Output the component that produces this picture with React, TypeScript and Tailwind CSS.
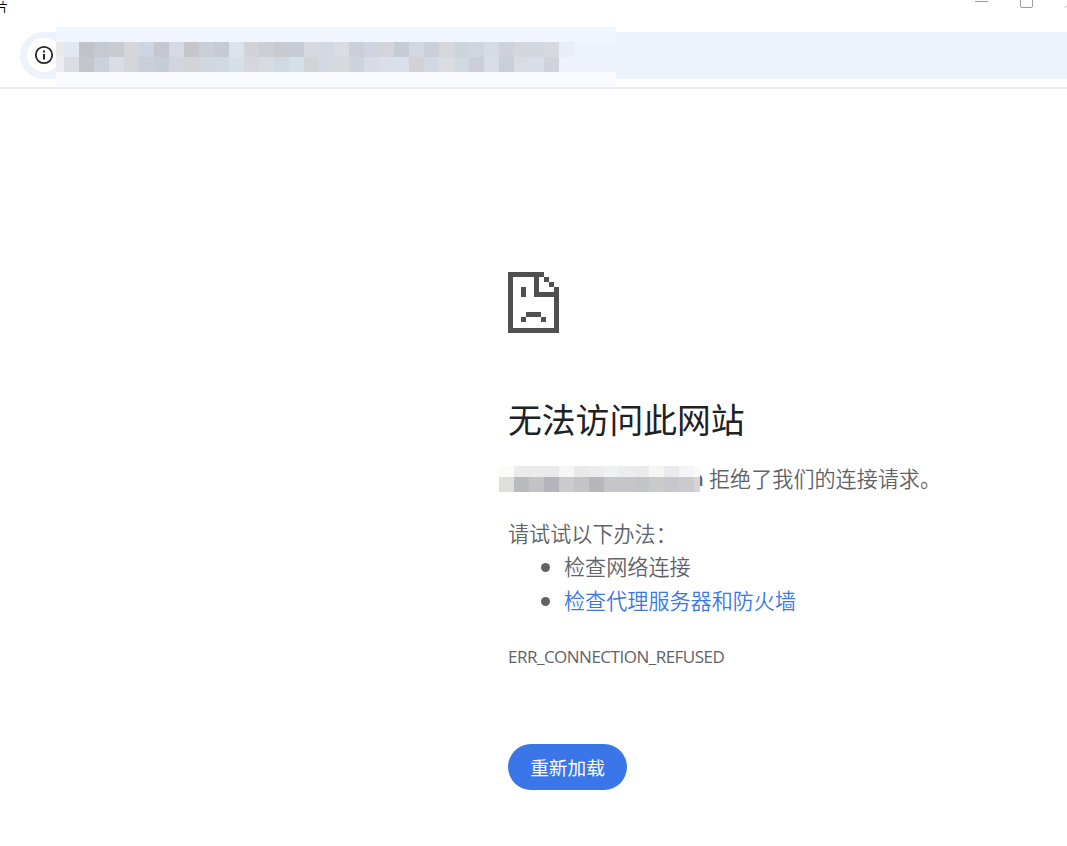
const addressRows = [
  "e8e8e9 e2e7f0 c1c2c8 c4c9d2 c8cbd0 d5d6dc cdd5e2 c4c6d0 d5dae4 c5c6cb c9ced7 c6cad3 dde3ed d2d3d8 cbcfd3 c9cacf c7cbd4 d6d9de d3d9e3 d9dde3 cacfd9 d0d4df d4d5db c5ccd3 d3d7e1 cacfd8 d6d7db ccd3d9 d1d5df d7dbe5 cdd1da d3d7db d1d7df d8d9de e8edf6",
  "ebecf1 dbdde3 c5c6cc cbd1da d9dde3 d3d5db c9ced9 c7cdd7 d2d5df d3d4d9 d1d7df d2d8e2 d6dee6 d6d7dc d6dbe4 d0d8e2 d7dfe6 d3d4d8 d1d9e5 d7d9dd ced4de d6dbe6 d9dee8 d9dfea d2d2d6 d1d8e3 d9dde1 d1d8df cccfd9 d8dce5 c8cfd6 dadce1 d7dee8 ced3dc edf2fb",
]

const hostRows = [
  "fbfbfa ebebec ebebec eaeaec f6f6f7 e9e9ea ececed f0f1f3 ececee eaeaeb f6f5f4 e9eaed f5f5f6 f8f9f9",
  "dededd b8bbbe c5c2c7 b4b5ba cbcbcd c5c5c8 b7b7b9 c6c6ca c6c6ca c2c4c7 cacacb c6c7cc cdcacd d5d5d8",
]

interface MosaicRowProps {
  colors: string
  className: string
  firstClass?: string
}

function MosaicRow({ colors, className, firstClass = "w-[15px]" }: MosaicRowProps) {
  return (
    <div className={`flex overflow-hidden ${className}`}>
      {colors.split(" ").map((color, index) => (
        <div
          key={index}
          className={`h-full shrink-0 ${index === 0 ? firstClass : "w-[15px]"}`}
          style={{ backgroundColor: `#${color}` }}
        />
      ))}
    </div>
  )
}

function WindowBar() {
  return (
    <div className="flex h-8 justify-between">
      <span className="-ml-[4px] block w-3 text-[12px] leading-[14px] text-black">片</span>
      <svg width="97" height="12" viewBox="0 0 97 12" fill="none" stroke="#9a9b9f">
        <path d="M5 1.5h13" />
        <rect x="50.5" y="-4.5" width="12" height="12" rx="1.5" />
        <path d="M97 5.5l-2 2" />
      </svg>
    </div>
  )
}

function AddressBar() {
  return (
    <div className="relative h-[55px] pl-5">
      <div className="flex h-[47px] items-center rounded-l-full bg-[#edf2fb] pl-[7px]">
        <div className="mb-px flex size-[34px] items-center justify-center rounded-full bg-white">
          <svg width="20" height="20" viewBox="0 0 20 20" fill="none" stroke="#252629">
            <circle cx="10" cy="10" r="8.2" strokeWidth="1.8" />
            <path d="M10 9v5.4M10 5.5v2" strokeWidth="2" />
          </svg>
        </div>
      </div>
      <div className="absolute -top-[5px] left-14 w-[560px]">
        <div className="h-[15px] bg-[#f1f5fd]" />
        <MosaicRow colors={addressRows[0]} className="h-[15px] bg-[#edf2fb]" firstClass="w-2" />
        <MosaicRow colors={addressRows[1]} className="h-[15px] bg-[#edf2fb]" firstClass="w-2" />
        <div className="h-[14px] bg-[#f8fafe]" />
      </div>
    </div>
  )
}

function SadPage() {
  return (
    <svg
      width="51"
      height="61"
      viewBox="0 0 51 61"
      fill="#505050"
      className="block"
    >
      <path fillRule="evenodd" d="M0 0H36V5H31V20H46V15H51V61H0ZM5 5V56H46V25H26V5Z" />
      <path d="M36 5h5v5h-5zM41 10h5v5h-5zM13 15h5v10h-5zM18 40h15v5H18zM13 45h5v5h-5zM33 45h5v5h-5z" />
    </svg>
  )
}

export default function App() {
  return (
    <div className="h-[846px] w-[1067px] overflow-hidden bg-white font-['Noto_Sans_CJK_SC',sans-serif]">
      <WindowBar />
      <AddressBar />
      <div className="h-0.5 bg-[#ebebeb]" />
      <main className="pt-[183px] pl-[508px] text-[21.1px] font-[350] text-[#5f6368]">
        <SadPage />
        <h1 className="mt-[61px] h-[50px] text-[33.8px] leading-[50px] font-normal text-[#202124]">
          无法访问此网站
        </h1>
        <div className="mt-[22px] -ml-[9px] flex h-[26px]">
          <div className="relative z-10 w-[201px] shrink-0">
            <MosaicRow colors={hostRows[0]} className="h-[11px]" />
            <MosaicRow colors={hostRows[1]} className="h-[15px]" />
          </div>
          <span className="-ml-[9px] w-3 font-['Open_Sans'] text-[20px] leading-[26px] font-semibold">
            n
          </span>
          <p className="-mt-px ml-[6px] leading-[26px] whitespace-nowrap">拒绝了我们的连接请求。</p>
        </div>
        <p className="mt-[24px] leading-[34px]">请试试以下办法：</p>
        <ul className="leading-[34px]">
          <li className="-mt-px flex h-[34px] items-center">
            <span className="mt-[3px] mr-[14px] ml-[33px] size-[9px] rounded-full bg-[#5f6368]" />
            检查网络连接
          </li>
          <li className="flex h-[34px] items-center">
            <span className="mt-[3px] mr-[14px] ml-[33px] size-[9px] rounded-full bg-[#5f6368]" />
            <a className="text-[#3b78e7]">检查代理服务器和防火墙</a>
          </li>
        </ul>
        <p className="mt-[27px] font-['Open_Sans'] text-[17px] leading-[26px] font-normal tracking-[-0.5px]">
          ERR_CONNECTION_REFUSED
        </p>
        <button className="mt-[74px] flex h-[46px] w-[119px] items-center justify-center rounded-full bg-[#3b76e8] text-[18.7px] font-normal text-white">
          重新加载
        </button>
      </main>
    </div>
  )
}
